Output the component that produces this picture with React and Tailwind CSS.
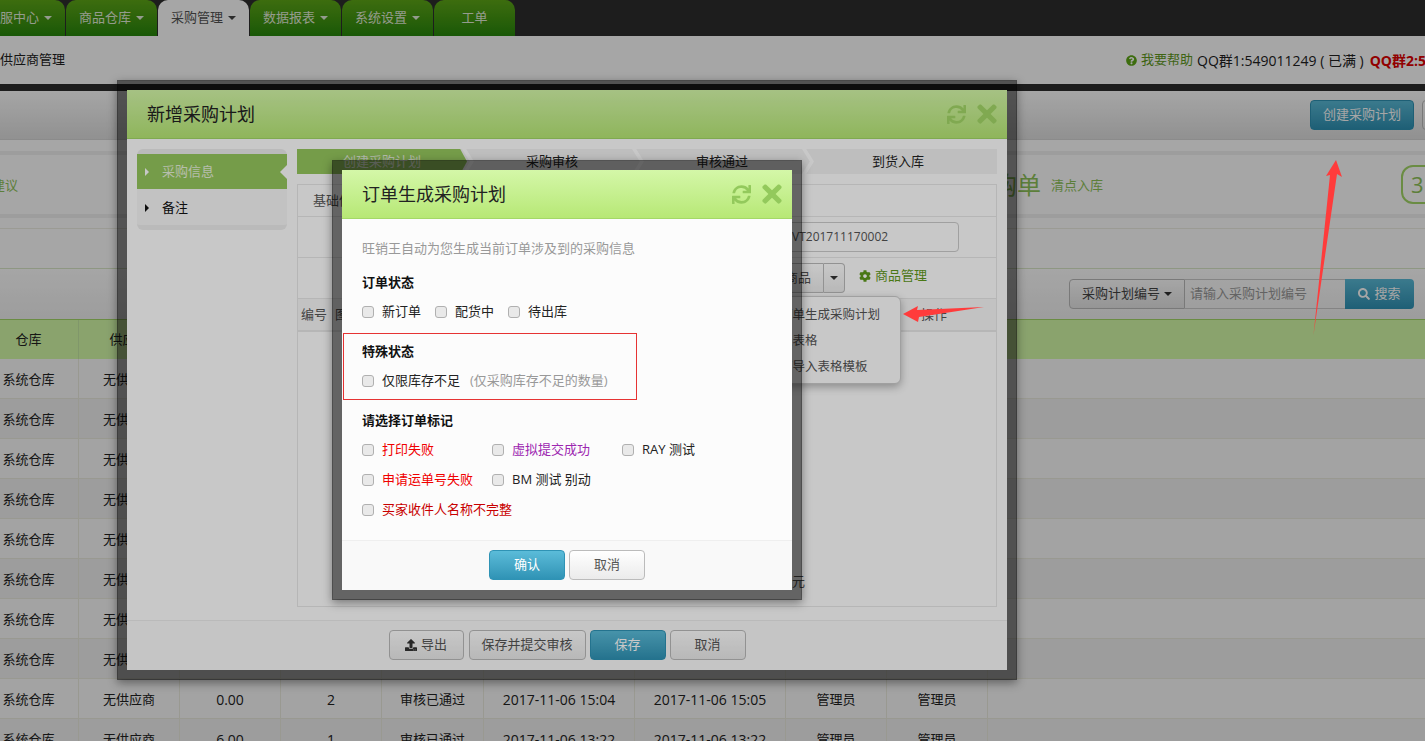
import React from 'react';
import { FaSync, FaTimes, FaUpload, FaCog, FaQuestionCircle, FaSearch } from 'react-icons/fa';

const Caret = ({ className = 'border-t-[#d8e8c8]' }) => (
  <span className={`inline-block w-0 h-0 border-x-[4px] border-t-[4px] border-x-transparent ${className}`} />
);

const tabs = [
  ['客服中心', true],
  ['商品仓库', true],
  ['采购管理', true, true],
  ['数据报表', true],
  ['系统设置', true],
  ['工单', false],
];

const Tab = ({ label, caret, active }) => (
  <div
    className={`flex-none h-[36px] rounded-t-[10px] flex items-center justify-center gap-[5px] text-[13px] ${caret ? 'w-[91px]' : 'w-[81px]'} ${
      active ? 'bg-white text-[#555]' : 'bg-gradient-to-b from-[#5ea818] to-[#26880c] text-[#e4eeda]'
    }`}
  >
    {label}
    {caret && <Caret className={active ? 'border-t-[#444]' : 'border-t-[#e4eeda]'} />}
  </div>
);

const cols = 'grid grid-cols-[100px_101px_101px_101px_102px_151px_151px_101px_101px_1fr] ml-[-21px]';

const rows = [
  ['0.00', '2', '2017-11-06 15:04', '2017-11-06 15:05'],
  ['0.00', '2', '2017-11-06 15:04', '2017-11-06 15:05'],
  ['0.00', '2', '2017-11-06 15:04', '2017-11-06 15:05'],
  ['0.00', '2', '2017-11-06 15:04', '2017-11-06 15:05'],
  ['0.00', '2', '2017-11-06 15:04', '2017-11-06 15:05'],
  ['0.00', '2', '2017-11-06 15:04', '2017-11-06 15:05'],
  ['0.00', '2', '2017-11-06 15:04', '2017-11-06 15:05'],
  ['0.00', '2', '2017-11-06 15:04', '2017-11-06 15:05'],
  ['0.00', '2', '2017-11-06 15:04', '2017-11-06 15:05'],
  ['6.00', '1', '2017-11-06 13:22', '2017-11-06 13:22'],
];

const Row = ({ r, i }) => {
  const cells = ['系统仓库', '无供应商', r[0], r[1], '审核已通过', r[2], r[3], '管理员', '管理员', ''];
  return (
    <div className={`${cols} h-[40px] border-b border-[#ececdf] text-[#222] text-[13px] ${i % 2 ? 'bg-[#f1f1f1]' : 'bg-[#fbfbfb]'}`}>
      {cells.map((c, j) => (
        <div key={j} className={`flex items-center justify-center pt-[2px] ${j < 9 ? 'border-r border-[#ececdf]' : ''} ${j === 2 || j === 3 || j === 5 || j === 6 ? 'text-[14px]' : ''}`}>
          {c}
        </div>
      ))}
    </div>
  );
};

const Btn = ({ children, primary, className = '' }) => (
  <div
    className={`h-[30px] rounded-[4px] flex items-center justify-center text-[13px] border ${
      primary
        ? 'bg-gradient-to-b from-[#5bbcd9] to-[#2f93b5] border-[#2f93b5] text-white'
        : 'bg-gradient-to-b from-white to-[#ebebeb] border-[#bbb] text-[#555]'
    } ${className}`}
  >
    {children}
  </div>
);

const Check = ({ children, className = '' }) => (
  <label className={`flex items-center gap-[8px] h-[20px] text-[13px] ${className}`}>
    <span className="flex-none w-[12px] h-[12px] rounded-[3px] border border-[#b0b0b0] bg-[#e9e9e9]" />
    <span className="mb-[2px]">{children}</span>
  </label>
);

const Step = ({ children, first, last }) => (
  <div className={`relative h-full flex items-center justify-center text-[13px] ${last ? 'flex-1 pr-2 text-[#222]' : 'flex-none w-[170px]'} ${first ? 'text-[#e4eedb]' : 'text-[#222]'}`}>
    {first && <div className="absolute inset-0 bg-[#96c75e] [clip-path:polygon(0_0,96%_0,100%_50%,96%_100%,0_100%)]" />}
    <span className="relative">{children}</span>
    {!last && <div className="absolute left-[165px] top-0 w-[12px] h-full bg-white [clip-path:polygon(0_0,35%_0,100%_50%,35%_100%,0_100%,65%_50%)]" />}
  </div>
);

const ModalHeader = ({ title, iconCls }) => (
  <div className="flex-none h-[49px] flex items-center justify-between pl-[20px] pr-[6px] bg-gradient-to-b from-[#d4f7a8] to-[#b7e875] border-b border-[#a4d868]">
    <div className="text-[18px] text-[#222]">{title}</div>
    <div className={`flex items-center gap-[7px] ${iconCls}`}>
      <FaSync size={19} />
      <FaTimes size={28} />
    </div>
  </div>
);

export default function App() {
  return (
    <div className="relative w-[1425px] h-[741px] overflow-hidden bg-white text-[#222] [font-family:'Open_Sans','Noto_Sans_CJK_SC',sans-serif]">
      {/* page */}
      <div className="h-[36px] bg-[#2e2e2e] flex gap-px ml-[-26px]">
        {tabs.map(([l, c, a]) => <Tab key={l} label={l} caret={c} active={a} />)}
      </div>
      <div className="h-[48px] flex items-center justify-between text-[13px]">
        <div>供应商管理</div>
        <div className="flex items-center whitespace-nowrap w-[299px] overflow-hidden flex-none">
          <FaQuestionCircle size={11} className="text-[#5ea818] mr-[4px] flex-none" />
          <span className="text-[#5f9a1c] mr-[4px]">我要帮助</span>
          <span className="mr-[6px] text-[14px]">QQ群1:549011249 ( 已满 )</span>
          <span className="text-[#e00000] font-bold text-[14px]">QQ群2:549011249</span>
        </div>
      </div>
      <div className="h-[7px] bg-[#2e2e2e]" />
      <div className="h-[49px] bg-gradient-to-b from-white to-[#dfdfdf] border-b border-[#d6d6d6] flex items-center justify-end gap-[8px]">
        <Btn primary className="w-[104px]">创建采购计划</Btn>
        <Btn className="w-[40px] mr-[-37px]">导出</Btn>
      </div>
      <div className="h-[11px]" />
      <div className="h-[67px] border-y-[4px] border-[#f2f2f2] flex items-center">
        <div className="text-[13px] text-[#8fc45a] ml-[-8px] flex-none w-[1001px] mt-[3px]">建议</div>
        <div className="flex items-center flex-none w-[410px]">
          <span className="text-[24px] text-[#8fc45a]">购单</span>
          <span className="text-[13px] text-[#8fc45a] ml-[10px] mt-[3px]">清点入库</span>
          <div className="ml-auto mr-[-54px] w-[56px] h-[39px] rounded-[12px] border-[2px] border-[#a4d868] text-[#8fc45a] text-[22px] flex items-center pl-[8px] flex-none">3</div>
        </div>
      </div>
      <div className="h-[10px]" />
      <div className="h-[40px] border-t border-[#eeeee4]" />
      <div className="h-[51px] border-t border-[#dbe8c8] bg-gradient-to-b from-white to-[#f1f1f1] flex items-center justify-end">
        <div className="flex w-[345px] h-[30px] flex-none text-[13px] mr-[11px]">
          <div className="w-[116px] rounded-l-[4px] bg-gradient-to-b from-white to-[#e6e6e6] border border-[#bbb] flex items-center justify-center gap-[4px] text-[#444]">
            采购计划编号 <Caret className="border-t-[#333]" />
          </div>
          <div className="flex-1 border-y border-[#ccc] flex items-center pl-[5px] text-[#999]">请输入采购计划编号</div>
          <div className="w-[69px] rounded-r-[4px] bg-gradient-to-b from-[#5bbcd9] to-[#2f93b5] text-white flex items-center justify-center gap-[4px]">
            <FaSearch size={12} /> 搜索
          </div>
        </div>
      </div>
      <div className={`${cols} h-[40px] bg-[#d4fba9] border-t border-[#a4d868] text-[13px]`}>
        {['仓库', '供应商', '金额', '数量', '状态', '创建时间', '审核时间', '创建人', '审核人', ''].map((h, i) => (
          <div key={i} className={`flex items-center justify-center ${i < 9 ? 'border-r border-[#c6e8a4]' : ''}`}>{h}</div>
        ))}
      </div>
      {rows.map((r, i) => <Row key={i} r={r} i={i} />)}

      <div className="absolute inset-0 bg-black/[.17]" />

      {/* first modal */}
      <div className="absolute left-[117px] top-[80px] w-[900px] h-[600px] border-[10px] border-black/50 bg-white bg-clip-padding flex flex-col shadow-[0_3px_9px_rgba(0,0,0,.4)]">
        <ModalHeader title="新增采购计划" iconCls="text-[#a4d868]" />
        <div className="flex-1 flex gap-[10px] px-[10px] pt-[10px] border-b border-[#eee] min-h-0">
          <div className="flex-none w-[150px] h-[81px] rounded-[6px] bg-[#f8f8f8] border-y-[5px] border-[#eeeeee] text-[13px]">
            <div className="relative h-[35px] bg-[#96c75e] text-[#e8f2dc] flex items-center pl-[25px] pt-px">
              <span className="absolute left-[8px] w-0 h-0 border-y-[4px] border-l-[4px] border-y-transparent border-l-white" />
              采购信息
              <span className="absolute right-0 w-[7px] h-[14px] bg-white [clip-path:polygon(100%_0,0_50%,100%_100%)]" />
            </div>
            <div className="relative h-[36px] flex items-center pl-[25px] pt-[2px] text-[#111]">
              <span className="absolute left-[8px] w-0 h-0 border-y-[4px] border-l-[4px] border-y-transparent border-l-[#111]" />
              备注
            </div>
          </div>
          <div className="flex-none w-[700px]">
            <div className="flex h-[25px] bg-[#f3f3f3]">
              <Step first>创建采购计划</Step>
              <Step>采购审核</Step>
              <Step>审核通过</Step>
              <Step last>到货入库</Step>
            </div>
            <div className="relative mt-[10px] h-[423px] border border-[#e8e8e8] flex flex-col text-[13px]">
              <div className="h-[32px] border-b border-[#e8e8e8] flex items-center pl-[15px] text-[#555] flex-none">基础信息</div>
              <div className="h-[41px] border-b border-[#e8e8e8] flex items-center justify-end pr-[37px] flex-none">
                <div className="w-[200px] h-[30px] rounded-[4px] border border-[#ccc] bg-white flex items-center pl-[32px] text-[12px] text-[#555]">VT201711170002</div>
              </div>
              <div className="h-[41px] border-b border-[#e8e8e8] flex items-center justify-end pr-[69px] flex-none gap-[14px]">
                <div className="flex h-[30px]">
                  <div className="w-[90px] rounded-l-[4px] border border-[#bbb] bg-gradient-to-b from-white to-[#ebebeb] flex items-center justify-end pr-[12px] text-[#555]">添加商品</div>
                  <div className="w-[21px] rounded-r-[4px] border border-l-0 border-[#bbb] bg-gradient-to-b from-white to-[#ebebeb] flex items-center justify-center"><Caret className="border-t-[#333]" /></div>
                </div>
                <div className="flex items-center gap-[4px] text-[#5f9a1c] h-[20px] mb-[4px]">
                  <FaCog size={12} /> 商品管理
                </div>
              </div>
              <div className="h-[33px] border-b-[2px] border-[#e8e8e8] flex items-center pl-[3px] text-[#555] flex-none bg-[#f8f8f8]">
                <span className="w-[34px]">编号</span>
                <span className="flex-1">图片</span>
                <span className="w-[75px]">操作</span>
              </div>
              <div className="flex-1 flex items-end pl-[494px] pb-[15px] text-[#555]">元</div>
              <div className="absolute left-[468px] top-[111px] w-[135px] h-[88px] rounded-[6px] bg-white border border-[#ccc] shadow-[0_3px_8px_rgba(0,0,0,.3)] pt-[5px] pl-[13px] text-[12.5px] text-[#555] leading-[26px]">
                <div>订单生成采购计划</div>
                <div>从表格</div>
                <div>下导入表格模板</div>
              </div>
            </div>
          </div>
        </div>
        <div className="flex-none h-[49px] bg-[#fcfcfc] flex items-center justify-center gap-[4px] pb-px">
          <Btn className="w-[75px] gap-[4px]"><FaUpload size={12} className="text-[#333]" />导出</Btn>
          <Btn className="w-[117px] ml-px">保存并提交审核</Btn>
          <Btn primary className="w-[76px]">保存</Btn>
          <Btn className="w-[76px]">取消</Btn>
        </div>
      </div>

      <div className="absolute inset-0 bg-black/[.216]" />

      {/* second modal */}
      <div className="absolute left-[332px] top-[160px] w-[470px] h-[440px] border-[10px] border-black/50 bg-[#fcfcfc] bg-clip-padding flex flex-col shadow-[0_3px_9px_rgba(0,0,0,.4)]">
        <ModalHeader title="订单生成采购计划" iconCls="text-[#93c95c]" />
        <div className="flex-1 px-[20px] pt-[19px] text-[13px] leading-[20px] text-[#222]">
          <div className="text-[#999]">旺销王自动为您生成当前订单涉及到的采购信息</div>
          <div className="mt-[14px] font-bold text-[#111]">订单状态</div>
          <div className="mt-[10px] flex gap-[14px]">
            <Check>新订单</Check>
            <Check>配货中</Check>
            <Check>待出库</Check>
          </div>
          <div className="mt-[19px] font-bold text-[#111]">特殊状态</div>
          <div className="mt-[10px] h-[20px] flex items-center">
            <Check>仅限库存不足</Check>
            <span className="ml-[10px] mb-[2px] text-[#999] text-[13px]">(仅采购库存不足的数量)</span>
          </div>
          <div className="mt-[19px] font-bold text-[#111]">请选择订单标记</div>
          <div className="mt-[10px] grid grid-cols-[130px_130px_130px] gap-y-[10px]">
            <Check className="text-[#f00000]">打印失败</Check>
            <Check className="text-[#9c27b0]">虚拟提交成功</Check>
            <Check>RAY 测试</Check>
            <Check className="text-[#f00000]">申请运单号失败</Check>
            <Check className="col-span-2">BM 测试 别动</Check>
            <Check className="col-span-3 text-[#c80000]">买家收件人名称不完整</Check>
          </div>
        </div>
        <div className="flex-none h-[50px] bg-[#f9f9f9] border-t border-[#efefef] flex items-center justify-center gap-[4px] pb-[2px]">
          <Btn primary className="w-[76px]">确认</Btn>
          <Btn className="w-[76px]">取消</Btn>
        </div>
        <div className="absolute left-[1px] top-[163px] w-[294px] h-[67px] border border-[#e63333]" />
      </div>

      {/* annotations */}
      <svg className="absolute inset-0 pointer-events-none" width="1425" height="741">
        <polygon points="1336,160 1326,176 1330,175 1313.5,335 1337,174 1342,177" fill="#ff3b3b" />
        <polygon points="903,314 918,306 917,310 984,307 919,317 918,322" fill="#ff3b3b" />
      </svg>
    </div>
  );
}
